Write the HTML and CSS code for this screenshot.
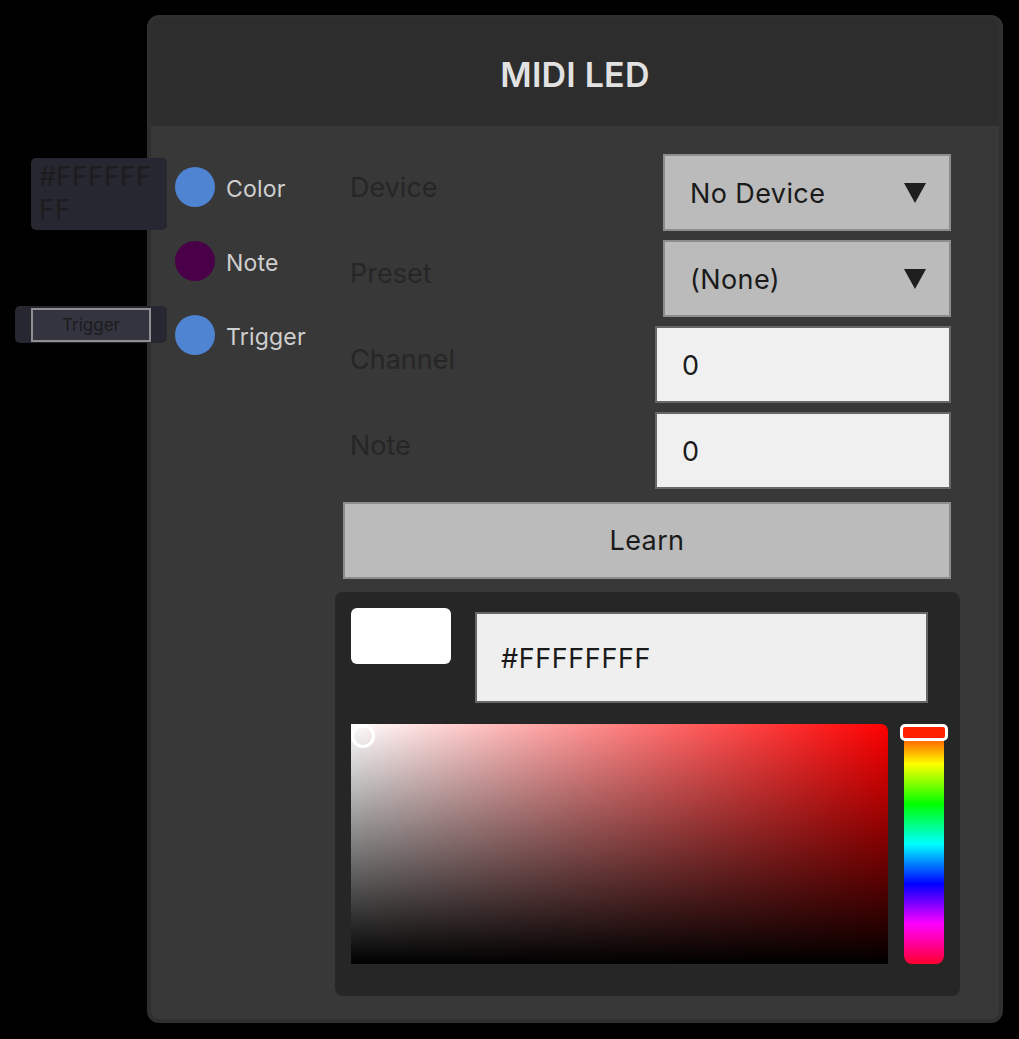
FILE: index.html
```html
<!DOCTYPE html>
<html>
<head>
<meta charset="utf-8">
<link rel="stylesheet" href="styles.css">
</head>
<body>
<div class="stage">
  <div class="node">
    <div class="node-header"><h1 class="title">MIDI LED</h1></div>
    <div class="node-body">
      <div class="ports">
        <div class="port"><span class="dot dot-blue"></span><span class="port-label">Color</span></div>
        <div class="port"><span class="dot dot-purple"></span><span class="port-label">Note</span></div>
        <div class="port"><span class="dot dot-blue"></span><span class="port-label">Trigger</span></div>
      </div>
      <div class="controls">
        <div class="form">
          <div class="row">
            <span class="row-label">Device</span>
            <div class="select"><span>No Device</span><svg class="caret" width="22" height="20" viewBox="0 0 22 20"><polygon points="0,0 22,0 11,20" fill="#1e1e1e"/></svg></div>
          </div>
          <div class="row">
            <span class="row-label">Preset</span>
            <div class="select"><span>(None)</span><svg class="caret" width="22" height="20" viewBox="0 0 22 20"><polygon points="0,0 22,0 11,20" fill="#1e1e1e"/></svg></div>
          </div>
          <div class="row">
            <span class="row-label">Channel</span>
            <div class="field">0</div>
          </div>
          <div class="row">
            <span class="row-label">Note</span>
            <div class="field">0</div>
          </div>
          <div class="learn">Learn</div>
        </div>
        <div class="picker">
          <div class="picker-top">
            <div class="swatch"></div>
            <div class="hex">#FFFFFFFF</div>
          </div>
          <div class="picker-main">
            <div class="sv">
              <div class="sv-dark"></div>
              <span class="sv-cursor"></span>
            </div>
            <div class="hue">
              <span class="hue-handle"></span>
            </div>
          </div>
        </div>
      </div>
    </div>
  </div>
  <div class="overlay overlay-color">#FFFFFFFF</div>
  <div class="overlay overlay-trigger"><div class="trigger-btn">Trigger</div></div>
</div>
</body>
</html>
```

FILE: styles.css
```css
* { box-sizing: border-box; }
html, body { margin: 0; padding: 0; background: #000; }
body { font-family: Inter, "Noto Sans", sans-serif; width: 1019px; height: 1039px; overflow: hidden; }

.stage { position: relative; padding: 15px 0 0 147px; }

.node {
  width: 856px;
  height: 1008px;
  border: 4px solid #303030;
  border-radius: 12px;
  overflow: hidden;
  display: flex;
  flex-direction: column;
  background: #383838;
}

.node-header {
  height: 107px;
  background: #2d2d2d;
  display: flex;
  align-items: center;
  justify-content: center;
}
.title {
  margin: 4px 0 0 0;
  font-size: 34px;
  font-weight: 600;
  color: #e2e2e2;
  letter-spacing: 0.2px;
}

.node-body {
  flex: 1;
  display: flex;
  padding: 28px 39px 23px 24px;
}

.ports {
  width: 160px;
  display: flex;
  flex-direction: column;
  gap: 34px;
  padding-top: 13px;
}
.port { display: flex; align-items: center; gap: 11px; height: 40px; }
.dot { width: 40px; height: 40px; border-radius: 50%; flex: none; }
.dot-blue { background: #4f84d2; }
.dot-purple { background: #4a0048; }
.port-label { font-size: 23px; color: #cfcfcf; padding-top: 3px; letter-spacing: 0.2px; }

.controls { width: 625px; display: flex; flex-direction: column; gap: 13px; }

.form { padding: 0 9px 0 8px; display: flex; flex-direction: column; gap: 9px; }
.row { height: 77px; display: flex; justify-content: space-between; align-items: flex-start; }
.row-label {
  margin: 17px 0 0 7px;
  font-size: 27px;
  line-height: 34px;
  color: #262626;
}

.select {
  width: 288px;
  height: 77px;
  background: #bbbbbb;
  border: 2px solid #8c8c8c;
  display: flex;
  align-items: center;
  justify-content: space-between;
  padding: 2px 23px 0 25px;
  font-size: 27px;
  letter-spacing: 0.4px;
  color: #1a1a1a;
}
.caret { margin-top: -2px; }

.field {
  width: 296px;
  height: 77px;
  background: #f0f0f0;
  border: 2px solid #676767;
  display: flex;
  align-items: center;
  padding: 2px 0 0 25px;
  font-size: 27px;
  color: #1a1a1a;
}

.learn {
  margin-top: 4px;
  height: 77px;
  background: #bbbbbb;
  border: 2px solid #8c8c8c;
  display: flex;
  align-items: center;
  justify-content: center;
  font-size: 27px;
  letter-spacing: 0.4px;
  color: #1a1a1a;
}

.picker {
  height: 404px;
  background: #262626;
  border-radius: 8px;
  padding: 16px 16px 32px 16px;
  display: flex;
  flex-direction: column;
  gap: 21px;
}
.picker-top { display: flex; gap: 24px; align-items: flex-start; }
.swatch { width: 100px; height: 56px; background: #fff; border-radius: 6px; }
.hex {
  margin-top: 4px;
  width: 453px;
  height: 91px;
  background: #efefef;
  border: 2px solid #676767;
  display: flex;
  align-items: center;
  padding: 2px 0 0 24px;
  font-size: 27px;
  letter-spacing: 0.6px;
  color: #1a1a1a;
}

.picker-main { display: flex; gap: 16px; height: 240px; }
.sv {
  position: relative;
  width: 537px;
  height: 240px;
  border-radius: 0 7px 0 0;
  overflow: hidden;
  background: linear-gradient(to right, #ffffff, #ff0000);
}
.sv-dark {
  position: absolute;
  inset: 0;
  background: linear-gradient(to bottom, rgba(0,0,0,0), #000);
}
.sv-cursor {
  position: absolute;
  left: 0;
  top: 0;
  width: 24px;
  height: 24px;
  border: 3px solid #fff;
  border-radius: 50%;
}

.hue {
  position: relative;
  width: 40px;
  height: 240px;
  border-radius: 8px;
  background: linear-gradient(to bottom, #ff0000 0%, #ffff00 16.67%, #00ff00 33.33%, #00ffff 50%, #0000ff 66.67%, #ff00ff 83.33%, #ff0030 100%);
}
.hue-handle {
  position: absolute;
  left: -4px;
  top: 0;
  width: 48px;
  height: 17px;
  border: 3px solid #fff;
  border-radius: 5px;
  background: #ff2000;
}

.overlay {
  position: absolute;
  background: #262730;
  border-radius: 5px;
}
.overlay-color {
  left: 31px;
  top: 158px;
  width: 136px;
  height: 72px;
  padding: 2px 8px 0 8px;
  font-size: 27px;
  line-height: 33px;
  color: #1d1d1f;
  word-break: break-all;
}
.overlay-trigger {
  left: 15px;
  top: 306px;
  width: 152px;
  height: 37px;
  padding: 2px 0 0 16px;
}
.trigger-btn {
  width: 120px;
  height: 34px;
  border: 2px solid #8f8f8f;
  background: #33343f;
  display: flex;
  align-items: center;
  justify-content: center;
  font-size: 17px;
  color: #1c1c1c;
}
```
